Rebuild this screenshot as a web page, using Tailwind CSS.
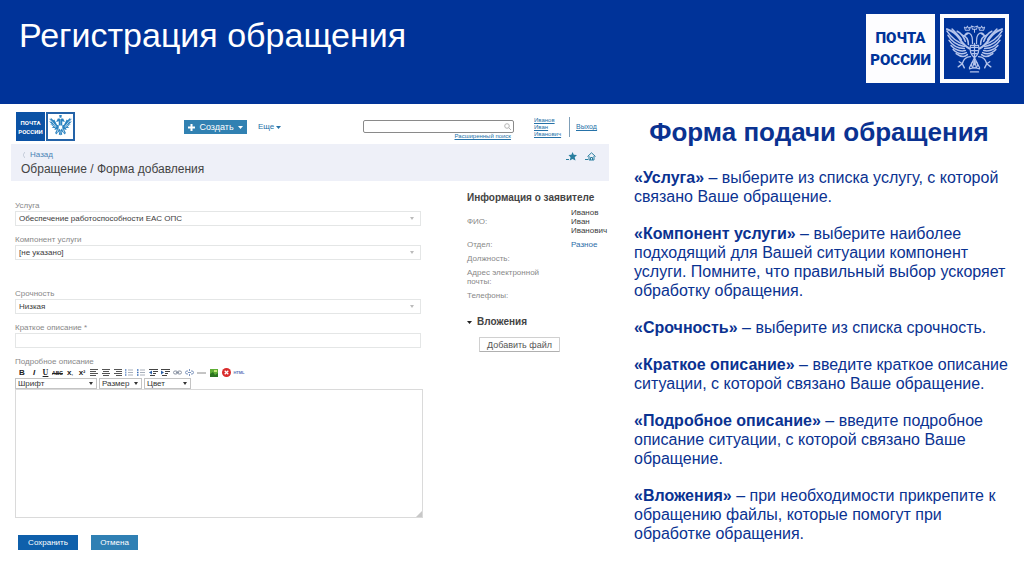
<!DOCTYPE html>
<html lang="ru">
<head>
<meta charset="utf-8">
<meta name="viewport" content="width=device-width, initial-scale=1">
<title>Регистрация обращения</title>
<script src="https://cdn.jsdelivr.net/npm/@tailwindcss/browser@4"></script>
</head>
<body class="min-h-screen flex flex-col bg-white font-['Liberation_Sans',Arial,sans-serif]">

<svg class="hidden" aria-hidden="true">
  <symbol id="eagle" viewBox="2 2 56 56">
    <g fill="none" stroke="currentColor" stroke-linecap="round" stroke-linejoin="round">
      <g id="wing" stroke-width="1.500">
        <path d="M25 30C21 28 18 25 15 20S9 13 3 11" stroke-width="2"/>
        <path d="M20 26C13 24 7 19 3 13"/>
        <path d="M20 28C14 27 8 24 4 17"/>
        <path d="M20 30C15 30 9 28 5 22"/>
        <path d="M21 32C17 33 11 32 7 27"/>
        <path d="M22 34C18 36 13 35 9 31"/>
        <path d="M23 36C20 39 16 38 12 35"/>
        <path d="M17 21C14 17 11 14 8 11"/>
        <path d="M21 23C19 17 17 15 13 13"/>
        <path d="M24 26C24 21 22 18 18 17"/>
        <path d="M28 25C28 20 28 17 25 15C23 14 21 15 20 18M24 15L21 17" stroke-width="1.200"/>
        <path d="M26 38C22 38 19 41 18 45M18 45L15 43M18 45L14 48M18 45L20 49" stroke-width="1.400"/>
        <path d="M21 12L20 9L22 10L23 8L24 10L26 9L25 12Z" stroke-width="1"/>
      </g>
      <use href="#wing" transform="translate(60 0) scale(-1 1)"/>
      <path d="M30 25V46M26 27C25 32 26 36 30 39C34 36 35 32 34 27ZM27 29H33M27 32H33M28 35H32" stroke-width="1.200"/>
      <path d="M28 11L27 8L30 9L33 8L32 11ZM30 11V14" stroke-width="1"/>
      <path d="M30 39L25 49M30 39L35 49M30 42L28 49M30 42L32 49M25 50C28 49 32 49 35 50M26 53H34" stroke-width="1.200"/>
      <circle cx="30" cy="46" r="3" stroke-width="1"/>
    </g>
  </symbol>
  <symbol id="eagle-solid" viewBox="0 0 26 26">
    <g id="half" fill="currentColor">
      <path d="M0 4L2 5L2 3L5 6L6 5L9 11L11 12V7L8 8L10 4H12L13 5V23L11 22L12 18L8 22L7 20L9 16L6 17L7 15L3 14L5 13L1 10L4 11L0 7L3 8Z"/>
      <path d="M2 6L8 13M4 11L8 14M11 15L9 20" stroke="#fff" stroke-width=".7" fill="none"/>
    </g>
    <use href="#half" transform="translate(26 0) scale(-1 1)"/>
    <path d="M11.500 0H14.500L14 3H12Z" fill="currentColor"/>
    <path d="M11 12H15V15L13 17L11 15Z" fill="#fff"/>
  </symbol>
</svg>

<header class="flex justify-between items-start h-[104px] pl-[19px] pr-[15px] pt-[14px] bg-[#003399] text-white">
  <h1 class="text-[34px] leading-[42px]">Регистрация обращения</h1>
  <div class="flex gap-[5px]">
    <div class="size-[69px] bg-[#fdfdff] text-[#003399] flex flex-col items-center justify-center font-black font-['Roboto','Liberation_Sans',sans-serif] text-[15px] leading-[22px]"><span>ПОЧТА</span><span>РОССИИ</span></div>
    <div class="size-[69px] bg-[#fdfdff] p-1 flex"><div class="flex-1 bg-[#003399] text-[#b4c4ec] p-[2px]"><svg class="size-full" aria-hidden="true"><use href="#eagle"/></svg></div></div>
  </div>
</header>

<main class="flex-1 grid grid-cols-[minmax(0,609fr)_minmax(0,415fr)]">
  <section class="pl-[11px] text-[8px] leading-[10px]">
    <div class="flex h-10 pl-[5px] pt-2 text-[#2672a8]">
      <div class="flex gap-[1px] w-[168px]">
        <div class="size-[29px] bg-[#0b52a5] text-white flex flex-col items-center justify-center font-bold font-['Roboto','Liberation_Sans',sans-serif] text-[6px] leading-[9px]"><span>ПОЧТА</span><span>РОССИИ</span></div>
        <div class="size-[29px] border-2 border-[#2463a8] bg-white text-[#2b83c0] p-[1px] flex"><svg class="size-full" aria-hidden="true"><use href="#eagle-solid"/></svg></div>
      </div>
      <button class="mt-2 h-[14px] w-[63px] bg-[#3181b2] text-white flex items-center justify-between px-1 text-[9px]">
        <svg class="size-[7px]" viewBox="0 0 7 7" aria-hidden="true"><path d="M3.500 0V7M0 3.500H7" stroke="currentColor" stroke-width="2"/></svg>
        <span>Создать</span>
        <svg class="w-[5px] h-[3px]" viewBox="0 0 5 3" aria-hidden="true"><path d="M0 0H5L2.500 3Z" fill="currentColor"/></svg>
      </button>
      <button class="mt-2 ml-[11px] h-[14px] flex items-center gap-[2px]"><span>Еще</span><svg class="w-[5px] h-[3px]" viewBox="0 0 5 3" aria-hidden="true"><path d="M0 0H5L2.500 3Z" fill="currentColor"/></svg></button>
      <div class="ml-auto mt-2 w-[151px]">
        <div class="relative">
          <input type="search" aria-label="Поиск" class="block w-full h-[13px] rounded-[2px] border border-[#8a8a8a] bg-white px-1 text-black">
          <svg class="absolute right-[3px] top-[3px] size-[7px] text-[#b5b5b5]" viewBox="0 0 7 7" fill="none" stroke="currentColor" aria-hidden="true"><circle cx="3" cy="3" r="2.300"/><path d="M4.700 4.700L7 7"/></svg>
        </div>
        <a href="#" class="block text-right underline text-[6px] leading-[7px] pr-[3px]">Расширенный поиск</a>
      </div>
      <a href="#" class="ml-5 mt-[5px] w-[35px] underline text-[6px] leading-[7px]">Иванов<br>Иван<br>Иванович</a>
      <div class="mt-[5px] h-5 border-l border-[#7f9fb8]"></div>
      <a href="#" class="mt-[10px] ml-[6px] w-[33px] underline text-[7px]">Выход</a>
    </div>

    <div class="h-[37px] bg-[#eef0f8] pl-[10px] pr-[13px] pt-[6px] flex justify-between">
      <div>
        <a href="#" class="flex items-center gap-[5px] text-[#4a83b5] pl-[2px]"><svg class="w-[2px] h-[6px] text-[#c3cbd8]" viewBox="0 0 2 6" aria-hidden="true"><path d="M2 0L0 3L2 6" fill="none" stroke="currentColor"/></svg>Назад</a>
        <h2 class="text-[12px] leading-[14px] mt-[2px] text-[#444]">Обращение / Форма добавления</h2>
      </div>
      <div class="flex gap-2 text-[#2a7f9f] pt-[2px]">
        <button class="h-2" aria-label="В избранное"><svg class="w-[11px] h-[9px]" viewBox="0 0 11 9" aria-hidden="true"><path d="M6.500 0L7.800 2.700L11 3L8.700 5.200L9.500 8.500L6.500 7L3.800 8.500L4.500 5.200L2.500 3L5.400 2.700Z" fill="currentColor"/><path d="M0 7.500H3" stroke="currentColor"/></svg></button>
        <button class="h-2" aria-label="Домашняя страница"><svg class="w-[11px] h-[9px]" viewBox="0 0 11 9" fill="none" stroke="currentColor" aria-hidden="true"><path d="M2.500 4.500L6.500 .8L10.500 4.500M4 4V8H9V4M5.500 8V5.500H7.500V8M0 7.500H3"/></svg></button>
      </div>
    </div>

    <div class="flex">
      <form class="w-[412px] pt-[18px] pl-[4px] text-[#888] [&>label]:leading-[13px]">
        <label for="service" class="block h-3">Услуга</label>
        <div class="relative mr-[2px]">
          <select id="service" class="block appearance-none w-full h-[15px] border border-[#e4e6e6] bg-white pl-[3px] text-[#3c3c3c]"><option>Обеспечение работоспособности ЕАС ОПС</option></select>
          <svg class="absolute right-[7px] top-[6px] w-[4px] h-[3px] text-[#bbb] pointer-events-none" viewBox="0 0 4 3" aria-hidden="true"><path d="M0 0H4L2 3Z" fill="currentColor"/></svg>
        </div>
        <label for="component" class="block h-3 mt-[7px]">Компонент услуги</label>
        <div class="relative mr-[2px]">
          <select id="component" class="block appearance-none w-full h-[15px] border border-[#e4e6e6] bg-white pl-[3px] text-[#3c3c3c]"><option>[не указано]</option></select>
          <svg class="absolute right-[7px] top-[6px] w-[4px] h-[3px] text-[#bbb] pointer-events-none" viewBox="0 0 4 3" aria-hidden="true"><path d="M0 0H4L2 3Z" fill="currentColor"/></svg>
        </div>
        <label for="urgency" class="block h-3 mt-[27px]">Срочность</label>
        <div class="relative mr-[2px]">
          <select id="urgency" class="block appearance-none w-full h-[15px] border border-[#e4e6e6] bg-white pl-[3px] text-[#3c3c3c]"><option>Низкая</option></select>
          <svg class="absolute right-[7px] top-[6px] w-[4px] h-[3px] text-[#bbb] pointer-events-none" viewBox="0 0 4 3" aria-hidden="true"><path d="M0 0H4L2 3Z" fill="currentColor"/></svg>
        </div>
        <label for="summary" class="block h-3 mt-[7px]">Краткое описание *</label>
        <div class="mr-[2px]"><input id="summary" type="text" class="block w-full h-[15px] border border-[#e4e6e6] px-[3px]"></div>
        <label for="details" class="block h-3 mt-[7px]">Подробное описание</label>

        <div class="flex items-center h-[11px] pl-[1px] text-[#222] text-[8px] leading-[10px] font-bold font-['Liberation_Serif',serif]">
          <button type="button" class="w-3 font-['Liberation_Sans',sans-serif]">B</button>
          <button type="button" class="w-3 italic font-['Liberation_Sans',sans-serif]">I</button>
          <button type="button" class="w-[11px] underline">U</button>
          <button type="button" class="w-[13px] line-through text-[5px] font-['Liberation_Sans',sans-serif]">ABC</button>
          <button type="button" class="w-3 font-['Liberation_Sans',sans-serif]">x<span class="text-[5px]">,</span></button>
          <button type="button" class="w-3 font-['Liberation_Sans',sans-serif]">x<span class="text-[6px]">²</span></button>
          <button type="button" class="w-3 flex justify-center" aria-label="По левому краю"><svg class="w-[8px] h-[7px]" viewBox="0 0 8 7" aria-hidden="true"><path d="M0 .5H8M0 2.500H6M0 4.500H8M0 6.500H6" stroke="#555"/></svg></button>
          <button type="button" class="w-3 flex justify-center" aria-label="По центру"><svg class="w-[8px] h-[7px]" viewBox="0 0 8 7" aria-hidden="true"><path d="M0 .5H8M1 2.500H7M0 4.500H8M1 6.500H7" stroke="#555"/></svg></button>
          <button type="button" class="w-[11px] flex justify-center" aria-label="По правому краю"><svg class="w-[8px] h-[7px]" viewBox="0 0 8 7" aria-hidden="true"><path d="M0 .5H8M2 2.500H8M0 4.500H8M2 6.500H8" stroke="#555"/></svg></button>
          <button type="button" class="w-3 flex justify-center" aria-label="Нумерованный список"><svg class="w-[8px] h-[7px]" viewBox="0 0 8 7" aria-hidden="true"><path d="M3 1H8M3 3.500H8M3 6H8" stroke="#a9b0bb"/><path d="M.8 0V7" stroke="#4f7ec0" stroke-dasharray="2 .5"/></svg></button>
          <button type="button" class="w-3 flex justify-center" aria-label="Маркированный список"><svg class="w-[8px] h-[7px]" viewBox="0 0 8 7" aria-hidden="true"><path d="M3 1H8M3 3.500H8M3 6H8" stroke="#a9b0bb"/><path d="M0 1H1.500M0 3.500H1.500M0 6H1.500" stroke="#3a6db8" stroke-width="1.500"/></svg></button>
          <button type="button" class="w-3 flex justify-center" aria-label="Уменьшить отступ"><svg class="w-[9px] h-[7px]" viewBox="0 0 9 7" aria-hidden="true"><path d="M0 .5H9M4 2.500H9M4 4.500H7M1 6.500H6" stroke="#444"/><path d="M3 1.500V5.500L0 3.500Z" fill="#2f62a8"/></svg></button>
          <button type="button" class="w-3 flex justify-center" aria-label="Увеличить отступ"><svg class="w-[9px] h-[7px]" viewBox="0 0 9 7" aria-hidden="true"><path d="M0 .5H9M4 2.500H9M4 4.500H7M1 6.500H6" stroke="#444"/><path d="M0 1.500V5.500L3 3.500Z" fill="#2f62a8"/></svg></button>
          <button type="button" class="w-3 flex justify-center" aria-label="Ссылка"><svg class="w-[9px] h-[5px]" viewBox="0 0 9 5" fill="none" stroke="#8a93a3" aria-hidden="true"><rect x=".5" y="1" width="4" height="3" rx="1.500"/><rect x="4.500" y="1" width="4" height="3" rx="1.500"/><path d="M3 2.500H6"/></svg></button>
          <button type="button" class="w-3 flex justify-center" aria-label="Убрать ссылку"><svg class="w-[9px] h-[7px]" viewBox="0 0 9 7" fill="none" stroke="#7b93bd" aria-hidden="true"><path d="M3 2H2Q.5 2 .5 3.500T2 5H3M6 2H7Q8.500 2 8.500 3.500T7 5H6M4.500 0V2M4.500 5V7M3 3.500H6"/></svg></button>
          <button type="button" class="w-[13px] flex justify-center" aria-label="Линия"><svg class="w-[9px] h-[2px]" viewBox="0 0 9 2" aria-hidden="true"><path d="M0 1H9" stroke="#8a8a8a"/></svg></button>
          <button type="button" class="w-3 flex justify-center" aria-label="Изображение"><svg class="size-2" viewBox="0 0 8 8" aria-hidden="true"><path d="M0 0H8V8H0Z" fill="#5fae35"/><path d="M0 5L3 3L5 6L8 4V8H0Z" fill="#2c7420"/><path d="M4 1H7V3H4Z" fill="#c4e67c"/></svg></button>
          <button type="button" class="w-[13px] flex justify-center" aria-label="Очистить"><svg class="size-[9px]" viewBox="0 0 9 9" aria-hidden="true"><circle cx="4.500" cy="4.500" r="4.500" fill="#d92b2b"/><path d="M2.700 2.700L6.300 6.300M6.300 2.700L2.700 6.300" stroke="#fff" stroke-width="1.300"/></svg></button>
          <button type="button" class="w-3 text-[4px] text-[#5674b8] font-['Liberation_Sans',sans-serif]">HTML</button>
        </div>
        <div class="flex gap-[2px] h-[11px] text-[#333]">
          <div class="relative w-[82px]"><select aria-label="Шрифт" class="block appearance-none w-full h-[11px] border border-[#c4c4c4] bg-white pl-[2px]"><option>Шрифт</option></select><svg class="absolute right-1 top-1 w-[4px] h-[3px] pointer-events-none" viewBox="0 0 4 3" aria-hidden="true"><path d="M0 0H4L2 3Z" fill="currentColor"/></svg></div>
          <div class="relative w-[43px]"><select aria-label="Размер" class="block appearance-none w-full h-[11px] border border-[#c4c4c4] bg-white pl-[2px]"><option>Размер</option></select><svg class="absolute right-1 top-1 w-[4px] h-[3px] pointer-events-none" viewBox="0 0 4 3" aria-hidden="true"><path d="M0 0H4L2 3Z" fill="currentColor"/></svg></div>
          <div class="relative w-[47px]"><select aria-label="Цвет" class="block appearance-none w-full h-[11px] border border-[#c4c4c4] bg-white pl-[2px]"><option>Цвет</option></select><svg class="absolute right-1 top-1 w-[4px] h-[3px] pointer-events-none" viewBox="0 0 4 3" aria-hidden="true"><path d="M0 0H4L2 3Z" fill="currentColor"/></svg></div>
        </div>
        <div class="relative">
          <textarea id="details" class="block w-full h-[129px] border border-[#dadada] resize-none p-1"></textarea>
          <svg class="absolute right-[1px] bottom-[1px] size-[6px] pointer-events-none" viewBox="0 0 6 6" aria-hidden="true"><path d="M6 0V6H0Z" fill="#c8c8c8"/></svg>
        </div>
        <div class="flex gap-[13px] mt-[17px] pl-[3px] text-white">
          <button type="button" class="w-[60px] h-[15px] bg-[#0f60ab]">Сохранить</button>
          <button type="button" class="w-[47px] h-[15px] bg-[#2f80b4]">Отмена</button>
        </div>
      </form>

      <aside class="flex-1 pl-11 pt-[10px] text-[#888]">
        <h3 class="text-[10px] leading-[14px] font-bold text-[#444] whitespace-nowrap">Информация о заявителе</h3>
        <dl class="grid grid-cols-[104px_auto] mt-[3px] items-center gap-y-[5px] leading-[9px]">
          <dt>ФИО:</dt><dd class="text-[#3c3c3c]">Иванов<br>Иван<br>Иванович</dd>
          <dt>Отдел:</dt><dd><a href="#" class="text-[#2c6ca8]">Разное</a></dd>
          <dt>Должность:</dt><dd></dd>
          <dt>Адрес электронной<br>почты:</dt><dd></dd>
          <dt>Телефоны:</dt><dd></dd>
        </dl>
        <h3 class="flex items-center gap-[5px] mt-[15px] text-[10px] leading-[14px] font-bold text-[#444]"><svg class="w-[5px] h-[3px]" viewBox="0 0 5 3" aria-hidden="true"><path d="M0 0H5L2.500 3Z" fill="#222"/></svg>Вложения</h3>
        <button class="ml-3 mt-2 w-[81px] h-[15px] border border-[#d0d0d0] border-b-[#b0b0b0] rounded-[1px] text-[#555] text-[9px] leading-[12px]">Добавить файл</button>
      </aside>
    </div>
  </section>

  <section class="pl-[25px] pr-3 pt-[13px] text-[#0a3291]">
    <h2 class="text-[26px] leading-[30px] font-bold text-center pr-2">Форма подачи обращения</h2>
    <div class="mt-[21px] flex flex-col gap-[18px] text-[16px] leading-[19px]">
      <p><b>«Услуга»</b> – выберите из списка услугу, с которой связано Ваше обращение.</p>
      <p><b>«Компонент услуги»</b> – выберите наиболее подходящий для Вашей ситуации компонент услуги. Помните, что правильный выбор ускоряет обработку обращения.</p>
      <p><b>«Срочность»</b> – выберите из списка срочность.</p>
      <p><b>«Краткое описание»</b> – введите краткое описание ситуации, с которой связано Ваше обращение.</p>
      <p><b>«Подробное описание»</b> – введите подробное описание ситуации, с которой связано Ваше обращение.</p>
      <p><b>«Вложения»</b> – при необходимости прикрепите к обращению файлы, которые помогут при обработке обращения.</p>
    </div>
  </section>
</main>
</body>
</html>
